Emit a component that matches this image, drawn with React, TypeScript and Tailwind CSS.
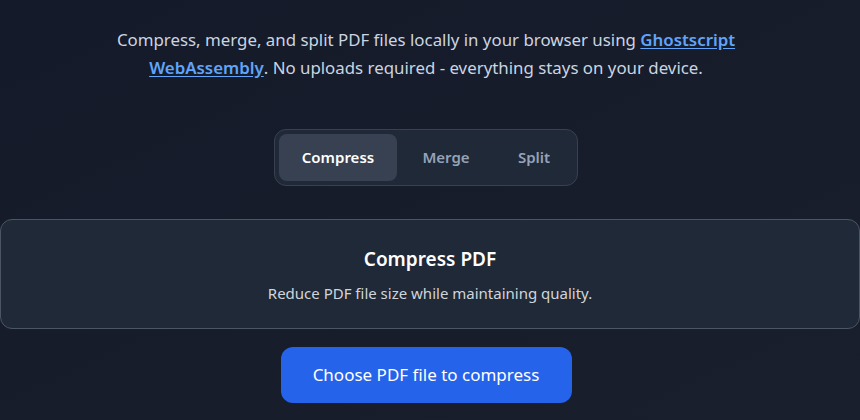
export default function App() {
  return (
    <div
      className="min-h-[420px] w-full overflow-hidden bg-gradient-to-br from-[#141a29] to-[#191f2c] pr-[8px] text-white flex flex-col items-center"
      style={{ fontFamily: '"Noto Sans", "Open Sans", sans-serif' }}
    >
      <p className="mt-[26px] max-w-[640px] text-center text-[16.85px] leading-[28px] text-[#cbd5e1]">
        Compress, merge, and split PDF files locally in your browser using{" "}
        <a className="font-semibold text-[#60a5fa] underline underline-offset-2">Ghostscript WebAssembly</a>. No uploads
        required - everything stays on your device.
      </p>

      <div className="mt-[47px] flex rounded-xl border border-[#374151] bg-[#1f2937] p-[4px]">
        <button className="h-[47px] w-[118px] rounded-lg bg-[#374151] text-[15px] font-semibold text-white">
          Compress
        </button>
        <button className="h-[47px] w-[98px] rounded-lg text-[15px] font-semibold text-[#94a3b8]">Merge</button>
        <button className="h-[47px] w-[78px] rounded-lg text-[15px] font-semibold text-[#94a3b8]">Split</button>
      </div>

      <div className="mt-[33px] -mr-[8px] flex h-[110px] flex-col items-center justify-center self-stretch rounded-xl border border-[#4b5563] bg-[#1f2937]">
        <h2 className="text-[19px] font-semibold leading-[28px] text-white">Compress PDF</h2>
        <p className="mt-[9px] text-[15px] leading-[22px] text-[#d1d5db]">Reduce PDF file size while maintaining quality.</p>
      </div>

      <button className="mt-[18px] h-[56px] w-[291px] rounded-xl bg-[#2563eb] text-[17px] text-white">
        Choose PDF file to compress
      </button>
    </div>
  );
}
